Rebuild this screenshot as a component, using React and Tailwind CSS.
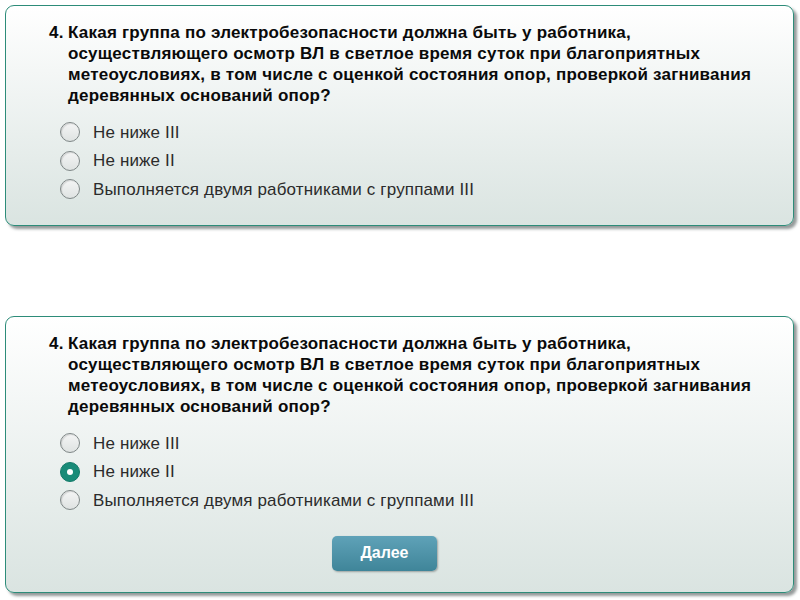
const options = [
  'Не ниже III',
  'Не ниже II',
  'Выполняется двумя работниками с группами III',
];

function Radio({ checked }) {
  if (checked) {
    return (
      <span className="flex h-[20px] w-[20px] shrink-0 items-center justify-center rounded-full border border-[#137a69] bg-[#198b78]">
        <span className="h-[6px] w-[6px] rounded-full bg-white" />
      </span>
    );
  }
  return (
    <span className="h-[20px] w-[20px] shrink-0 rounded-full border border-[#7f8787] bg-gradient-to-b from-[#f4f5f5] to-[#dfe3e2] shadow-[inset_1px_1px_1px_rgba(0,0,0,0.12)]" />
  );
}

function QuestionCard({ selected, showNext, className }) {
  return (
    <div
      className={`rounded-[9px] border border-[#2d8c79] bg-gradient-to-b from-white to-[#dae4e1] pl-[43px] pr-4 pt-[16px] shadow-[3px_3px_3px_rgba(60,70,70,0.55)] ${className}`}
    >
      <div className="flex text-[17px] font-bold leading-[21px] tracking-[0.22px] text-[#0a0a0a]">
        <span className="w-[19px] shrink-0">4.</span>
        <p>
          Какая группа по электробезопасности должна быть у работника,
          <br />
          осуществляющего осмотр ВЛ в светлое время суток при благоприятных
          <br />
          метеоусловиях, в том числе с оценкой состояния опор, проверкой загнивания
          <br />
          деревянных оснований опор?
        </p>
      </div>

      <div className="mt-[12px] flex flex-col pl-[11px]">
        {options.map((opt, i) => (
          <label key={opt} className="flex h-[28.5px] items-center gap-[13px] text-[17px] tracking-[0.15px] text-[#2b2b2b]">
            <Radio checked={selected === i} />
            <span>{opt}</span>
          </label>
        ))}
      </div>

      {showNext && (
        <div className="mt-[21px] pl-[283px]">
          <button className="h-[35px] w-[105px] rounded-[5px] bg-gradient-to-b from-[#5fa2b8] to-[#3f8599] text-[16px] font-bold text-white shadow-[1px_1px_2px_rgba(0,0,0,0.3)]">
            Далее
          </button>
        </div>
      )}
    </div>
  );
}

export default function App() {
  return (
    <div
      className="h-[600px] w-[800px] bg-white pl-[5px] pt-[5px]"
      style={{ fontFamily: '"Liberation Sans", Arial, sans-serif' }}
    >
      <QuestionCard selected={-1} className="h-[221px] w-[789px]" />
      <QuestionCard selected={1} showNext className="mt-[90px] h-[277px] w-[789px]" />
    </div>
  );
}
